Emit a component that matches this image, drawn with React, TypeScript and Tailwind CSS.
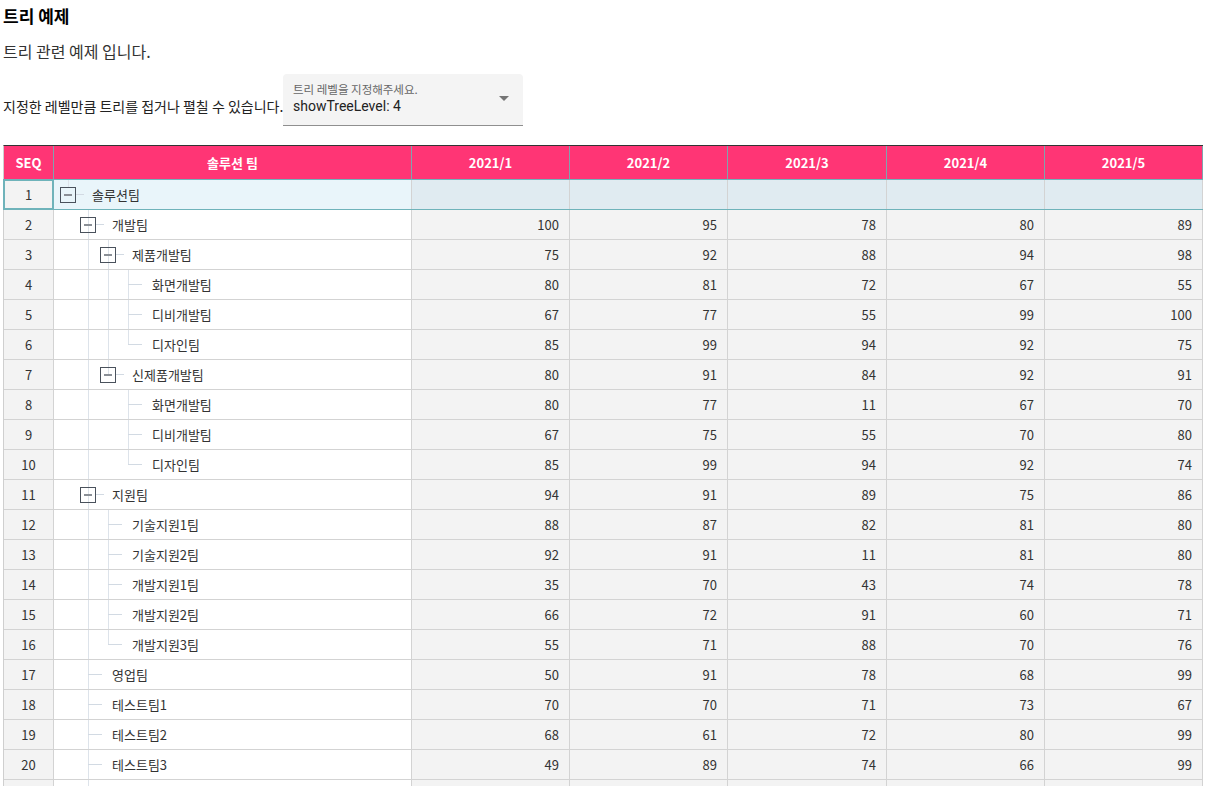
import React from "react";

type Row = {
  seq: number;
  name: string;
  level: number;
  exp: boolean;
  vals: number[] | null;
  guides: [number, "f" | "h" | "t"][];
};

const R = (
  seq: number,
  name: string,
  level: number,
  exp: boolean,
  vals: number[] | null,
  guides: [number, "f" | "h" | "t"][]
): Row => ({ seq, name, level, exp, vals, guides });

const rows: Row[] = [
  R(1, "솔루션팀", 0, true, null, [[0, "t"]]),
  R(2, "개발팀", 1, true, [100, 95, 78, 80, 89], [[1, "f"]]),
  R(3, "제품개발팀", 2, true, [75, 92, 88, 94, 98], [[1, "f"], [2, "f"]]),
  R(4, "화면개발팀", 3, false, [80, 81, 72, 67, 55], [[1, "f"], [2, "f"], [3, "f"]]),
  R(5, "디비개발팀", 3, false, [67, 77, 55, 99, 100], [[1, "f"], [2, "f"], [3, "f"]]),
  R(6, "디자인팀", 3, false, [85, 99, 94, 92, 75], [[1, "f"], [2, "f"], [3, "h"]]),
  R(7, "신제품개발팀", 2, true, [80, 91, 84, 92, 91], [[1, "f"], [2, "h"]]),
  R(8, "화면개발팀", 3, false, [80, 77, 11, 67, 70], [[1, "f"], [3, "f"]]),
  R(9, "디비개발팀", 3, false, [67, 75, 55, 70, 80], [[1, "f"], [3, "f"]]),
  R(10, "디자인팀", 3, false, [85, 99, 94, 92, 74], [[1, "f"], [3, "h"]]),
  R(11, "지원팀", 1, true, [94, 91, 89, 75, 86], [[1, "f"]]),
  R(12, "기술지원1팀", 2, false, [88, 87, 82, 81, 80], [[1, "f"], [2, "f"]]),
  R(13, "기술지원2팀", 2, false, [92, 91, 11, 81, 80], [[1, "f"], [2, "f"]]),
  R(14, "개발지원1팀", 2, false, [35, 70, 43, 74, 78], [[1, "f"], [2, "f"]]),
  R(15, "개발지원2팀", 2, false, [66, 72, 91, 60, 71], [[1, "f"], [2, "f"]]),
  R(16, "개발지원3팀", 2, false, [55, 71, 88, 70, 76], [[1, "f"], [2, "h"]]),
  R(17, "영업팀", 1, false, [50, 91, 78, 68, 99], [[1, "f"]]),
  R(18, "테스트팀1", 1, false, [70, 70, 71, 73, 67], [[1, "f"]]),
  R(19, "테스트팀2", 1, false, [68, 61, 72, 80, 99], [[1, "f"]]),
  R(20, "테스트팀3", 1, false, [49, 89, 74, 66, 99], [[1, "f"]]),
];

const numWidths = ["w-[158px]", "w-[158px]", "w-[159px]", "w-[158px]", "w-[158px]"];
const months = ["2021/1", "2021/2", "2021/3", "2021/4", "2021/5"];

const KR = "font-['Noto_Sans_CJK_KR','Noto_Sans',sans-serif]";

function TreeCell({ r }: { r: Row }) {
  const c = 14 + 20 * r.level;
  return (
    <div className="relative h-full w-full">
      {r.guides.map(([lv, kind], i) => {
        const x = 14 + 20 * lv;
        const h = kind === "f" ? "100%" : kind === "h" ? "50%" : "8px";
        return (
          <div
            key={i}
            className="absolute top-0 w-px bg-[#dde3ea]"
            style={{ left: x, height: h }}
          />
        );
      })}
      {r.exp ? (
        <>
          <div
            className="absolute top-[14px] h-px w-[8px] bg-[#d2dae3]"
            style={{ left: c + 8 }}
          />
          <div
            className="absolute top-[7px] flex h-[16px] w-[16px] items-center justify-center border border-[#4a525c] bg-transparent"
            style={{ left: c - 8 }}
          >
            <div className="h-[2px] w-[8px] bg-[#8a8f96]" />
          </div>
        </>
      ) : (
        <div
          className="absolute top-[14px] h-px w-[14px] bg-[#d2dae3]"
          style={{ left: c }}
        />
      )}
      <div
        className="absolute top-0 flex h-full items-center text-[13px] text-[#333]"
        style={{ left: 38 + 20 * r.level }}
      >
        {r.name}
      </div>
    </div>
  );
}

function BodyRow({ r }: { r: Row }) {
  const sel = r.seq === 1;
  return (
    <div
      className={`flex text-[13px] text-[#333] ${
        sel ? "h-[31px] border-y border-[#6fb3ba]" : "h-[30px] border-b border-[#d3d3d3]"
      }`}
    >
      {sel ? (
        <div className="-my-px -ml-px flex h-[31px] w-[51px] items-center justify-center border-2 border-[#6fb3ba] bg-[#f3f3f3]">
          {r.seq}
        </div>
      ) : (
        <div className="flex w-[50px] items-center justify-center border-r border-[#d3d3d3] bg-[#f3f3f3]">
          {r.seq}
        </div>
      )}
      <div className={`w-[358px] border-r border-[#d3d3d3] ${sel ? "bg-[#e9f5fa]" : "bg-white"}`}>
        <TreeCell r={r} />
      </div>
      {numWidths.map((w, i) => (
        <div
          key={i}
          className={`flex ${w} items-center justify-end border-r border-[#d3d3d3] pr-[10px] ${
            sel ? "bg-[#e0ebf1]" : "bg-[#f3f3f3]"
          }`}
        >
          {r.vals && r.vals[i] !== undefined ? r.vals[i] : ""}
        </div>
      ))}
    </div>
  );
}

export default function App() {
  return (
    <div className={`min-h-screen bg-white pl-[3px] pt-[4px] text-[#222] ${KR}`}>
      <h1 className="text-[17px] font-bold leading-[24px] text-black">트리 예제</h1>
      <p className="mt-[12px] text-[16px] leading-[22px] text-[#333]">트리 관련 예제 입니다.</p>
      <div className="mt-[12px] flex items-end">
        <span className="mb-[10px] w-[280px] whitespace-nowrap text-[14px] leading-[20px] text-[#222]">
          지정한 레벨만큼 트리를 접거나 펼칠 수 있습니다.
        </span>
        <div className="relative h-[52px] w-[240px] rounded-t-[4px] border-b border-[#8f8f8f] bg-[#f4f4f4]">
          <div className="absolute left-[10px] top-[8px] text-[11.5px] leading-[14px] text-[#666]">
            트리 레벨을 지정해주세요.
          </div>
          <div className="absolute left-[10px] top-[24px] font-['Roboto',sans-serif] text-[14px] leading-[17px] text-[#222]">
            showTreeLevel: 4
          </div>
          <svg
            className="absolute right-[14px] top-[22px]"
            width="10"
            height="6"
            viewBox="0 0 10 6"
          >
            <path d="M0 0 L10 0 L5 5 Z" fill="#757575" />
          </svg>
        </div>
      </div>

      <div className="mt-[19px] w-[1200px] border-l border-t border-l-[#cfcfcf] border-t-[#333]">
        <div className="flex h-[33px] bg-[#ff3575] text-[13px] font-bold text-white">
          <div className="flex w-[50px] items-center justify-center border-r border-[#7fa4ae]">SEQ</div>
          <div className="flex w-[358px] items-center justify-center border-r border-[#7fa4ae]">솔루션 팀</div>
          {months.map((m, i) => (
            <div
              key={m}
              className={`flex ${numWidths[i]} items-center justify-center border-r border-[#7fa4ae]`}
            >
              {m}
            </div>
          ))}
        </div>
        {rows.map((r) => (
          <BodyRow key={r.seq} r={r} />
        ))}
        <div className="flex h-[30px]">
          <div className="w-[50px] border-r border-[#d3d3d3] bg-[#f3f3f3]" />
          <div className="w-[358px] border-r border-[#d3d3d3] bg-white">
            <div className="relative h-full w-full">
              <div className="absolute left-[34px] top-0 h-full w-px bg-[#dde3ea]" />
            </div>
          </div>
          {numWidths.map((w, i) => (
            <div key={i} className={`${w} border-r border-[#d3d3d3] bg-[#f3f3f3]`} />
          ))}
        </div>
      </div>
    </div>
  );
}
